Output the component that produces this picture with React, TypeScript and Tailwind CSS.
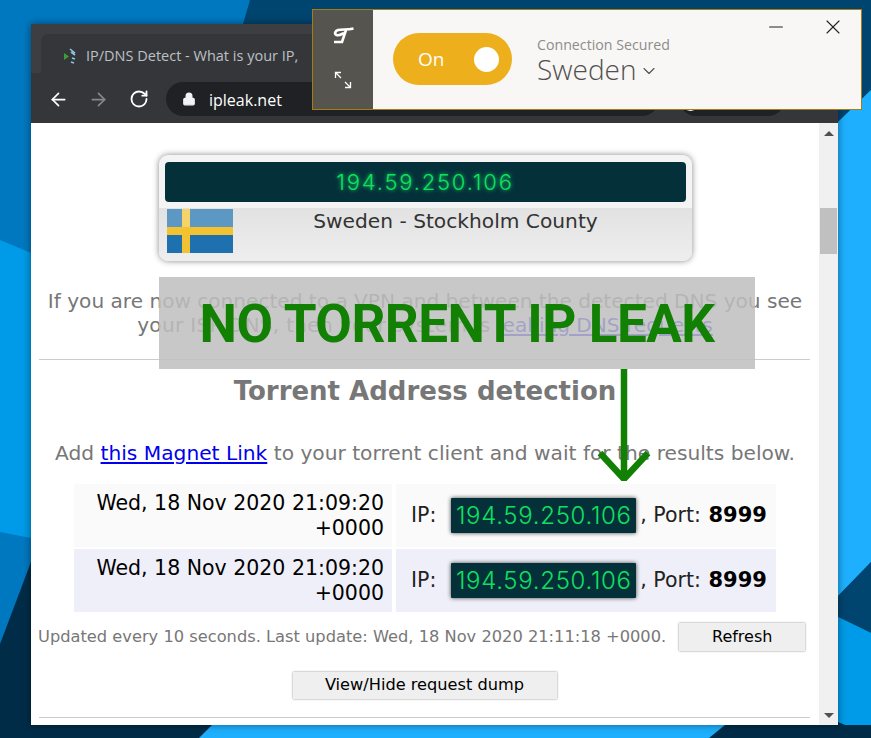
import { ArrowLeft, ArrowRight, ChevronDown, Lock, Minus, RotateCw, X } from "lucide-react";

const sans = "font-['DejaVu_Sans',sans-serif]";
const digital = "font-['Inter',sans-serif]";

function IpBadge() {
  return (
    <span
      className={`${digital} inline-block h-[35px] w-[185px] rounded-[1px] bg-[#04303a] text-center text-[24px] leading-[35px] font-light tracking-[0.7px] text-[#0fe060] shadow-[0_0_4px_#444]`}
    >
      194.59.250.106
    </span>
  );
}

function TorrentRow({ tint }: { tint: string }) {
  return (
    <div className="flex gap-[4px]">
      <div className={`${tint} h-[63px] w-[318px] px-[8px] pt-[7px] text-right text-[20.5px] leading-[25px] text-black`}>
        Wed, 18 Nov 2020 21:09:20
        <br />
        +0000
      </div>
      <div className={`${tint} flex h-[63px] w-[380px] items-center pl-[15px] text-[20.5px] text-[#222]`}>
        <span className="mr-[15px]">IP:</span>
        <IpBadge />
        <span className="ml-[4px]">, Port:&nbsp;</span>
        <b className="ml-[1px] text-[21px] text-black">8999</b>
      </div>
    </div>
  );
}

function Chrome() {
  return (
    <div className="flex h-[99px] flex-col bg-[#35363a]">
      <div className="flex h-[49px] items-end bg-[#3c3e41] pl-[10px]">
        <div className="flex h-[39px] w-[300px] items-center rounded-t-[8px] bg-[#35363a] pt-[4px] pl-[22px]">
          <svg width="14" height="18" viewBox="0 0 14 18" className="mr-[9px]">
            <path d="M1 6v7l5-3.5z" fill="#3d9a3d" />
            <path d="M7 2l5 4M8 5l4 3M9 11l3 1M8 15l3 1" stroke="#8fc4dc" strokeWidth="1.6" />
          </svg>
          <span className="font-['Open_Sans',sans-serif] text-[14.5px] whitespace-nowrap text-[#bdc1c6]">
            IP/DNS Detect - What is your IP,
          </span>
        </div>
      </div>
      <div className="flex h-[50px] items-start pt-[9px] pl-[17px]">
        <ArrowLeft size={21} strokeWidth={2} className="mt-[7px] text-white" />
        <ArrowRight size={21} strokeWidth={2} className="mt-[7px] ml-[19px] text-[#85878a]" />
        <RotateCw size={20} strokeWidth={2.2} className="mt-[7px] ml-[20px] text-white" />
        <div className="ml-[17px] flex h-[34px] w-[493px] items-center rounded-full bg-[#202124] pl-[16px]">
          <Lock size={14} fill="#f1f3f4" className="text-[#f1f3f4]" />
          <span className="mt-[1px] ml-[13px] font-['Open_Sans',sans-serif] text-[16px] text-white">ipleak.net</span>
        </div>
        <div className="ml-[20px] h-[34px] w-[106px] overflow-hidden rounded-full bg-[#202124] pt-[9px] pl-[3px]">
          <div className="h-[20px] w-[17px] rounded-full bg-white" />
        </div>
      </div>
    </div>
  );
}

function Scrollbar() {
  return (
    <div className="flex w-[19px] flex-col items-center bg-[#f0f0f0]">
      <div className="mt-[8px] h-0 w-0 border-x-[5px] border-b-[5px] border-x-transparent border-b-[#505050]" />
      <div className="mt-[72px] h-[46px] w-[17px] bg-[#c0c0c0]" />
      <div className="mt-auto mb-[7px] h-0 w-0 border-x-[5px] border-t-[5px] border-x-transparent border-t-[#505050]" />
    </div>
  );
}

function Page() {
  return (
    <div className={`${sans} flex min-h-0 flex-1 flex-col items-center bg-white`}>
      <div className="mt-[32px] h-[106px] w-[533px] overflow-hidden rounded-[9px] bg-[#f4f4f4] pt-[7px] shadow-[0_0_6px_#888]">
        <div
          className={`${digital} mx-[6px] h-[40px] rounded-[4px] bg-[#04303a] text-center text-[22px] leading-[40px] font-light tracking-[1.8px] text-[#0fe060] [text-shadow:0_0_4px_#0fe060]`}
        >
          194.59.250.106
        </div>
        <div className="mt-[6px] flex h-[53px] bg-gradient-to-b from-[#e2e2e2] to-[#eeeeee] pt-[1px] pl-[8px]">
          <svg width="66" height="44" viewBox="0 0 66 44" className="shrink-0">
            <rect width="66" height="44" fill="#1f70ae" />
            <rect x="15" width="8" height="44" fill="#f2c230" />
            <rect y="18" width="66" height="8" fill="#f2c230" />
            <rect width="66" height="18" fill="#fff" opacity="0.28" />
          </svg>
          <div className="flex-1 pr-[13px] text-center text-[20.2px] leading-[24px] text-[#333]">
            Sweden - Stockholm County
          </div>
        </div>
      </div>
      <p className="mt-[28px] w-[770px] text-center text-[20.1px] leading-[24px] text-[#777]">
        If you are now connected to a VPN and between the detected DNS you see{" "}
        <span className="tracking-[0.3px]">your ISP DNS, then your system is</span>{" "}
        <span className="text-[#0000ee] underline">leaking DNS requests</span>
      </p>
      <div className="mt-[22px] mr-[1px] h-px w-[771px] bg-[#ccc]" />
      <h2 className="mt-[15px] text-[26px] leading-[32px] font-bold text-[#777]">Torrent Address detection</h2>
      <p className="mt-[34px] text-[20.2px] leading-[24px] text-[#777]">
        Add <span className="text-[#0000ee] underline">this Magnet Link</span> to your torrent client and wait for the results below.
      </p>
      <div className="mt-[19px] flex flex-col gap-[2px]">
        <TorrentRow tint="bg-[#fafafa]" />
        <TorrentRow tint="bg-[#efeff9]" />
      </div>
      <div className="mt-[11px] mr-[1px] flex w-[773px] items-center">
        <span className="text-[16.25px] whitespace-nowrap text-[#777]">
          Updated every 10 seconds. Last update: Wed, 18 Nov 2020 21:11:18 +0000.
        </span>
        <button className="ml-[13px] h-[28px] w-[126px] bg-[#efefef] text-[16px] text-black shadow-[0_0_2px_#888]">Refresh</button>
      </div>
      <button className="mt-[21px] mr-[1px] h-[27px] w-[264px] bg-[#efefef] text-[16.2px] text-black shadow-[0_0_2px_#888]">
        View/Hide request dump
      </button>
      <div className="mt-[18px] mr-[1px] h-px w-[771px] bg-[#ccc]" />
    </div>
  );
}

function Vpn() {
  return (
    <div className="absolute top-[9px] left-[312px] flex h-[101px] w-[550px] border border-[#a87c10] bg-[#f9f7f5]">
      <div className="flex w-[60px] flex-col items-center bg-[#55544e] pt-[17px]">
        <svg width="21" height="17" viewBox="0 0 21 17" fill="none" stroke="#fff" strokeWidth="2.6">
          <path d="M13 3L9 15H1" />
          <path d="M20.5 1.5C14 3 9 2 5 3C2 4 1 7 3.5 8C6 9 9 7 11 6" />
        </svg>
        <svg width="18" height="18" viewBox="0 0 18 18" fill="none" stroke="#fff" strokeWidth="1.3" className="mt-[27px]">
          <path d="M1.5 1.5L7 7M1.5 7V1.5H7M16.5 16.5L11 11M16.5 11V16.5H11" />
        </svg>
      </div>
      <div className="mt-[23px] ml-[20px] flex h-[52px] w-[119px] items-center justify-between rounded-full bg-[#edaf1b] pr-[13px] pl-[25px]">
        <span className="font-['Open_Sans',sans-serif] text-[19px] text-white">On</span>
        <div className="h-[25px] w-[25px] rounded-full bg-white" />
      </div>
      <div className="mt-[26px] ml-[25px] font-['Open_Sans',sans-serif]">
        <div className="text-[14.2px] leading-[18px] text-[#8c8c8c]">Connection Secured</div>
        <div className="flex items-center text-[28px] leading-[31px] font-light text-[#505050]">
          Sweden
          <ChevronDown size={20} strokeWidth={1.3} className="mt-[2px] ml-[3px]" />
        </div>
      </div>
      <Minus size={22} strokeWidth={1.2} className="absolute top-[6px] left-[452px] text-[#222]" />
      <X size={24} strokeWidth={1.1} className="absolute top-[5px] left-[508px] text-[#222]" />
    </div>
  );
}

export default function App() {
  return (
    <div className="relative h-[738px] w-[871px] overflow-hidden bg-[#0078c0]">
      <svg className="absolute inset-0" width="871" height="738" viewBox="0 0 871 738">
        <polygon points="250,0 871,0 871,90 838,122 838,24 243,24" fill="#00456f" />
        <polygon points="838,122 871,90 871,562 838,596" fill="#1eb0ff" />
        <polygon points="838,596 871,562 871,633 838,617" fill="#00456f" />
        <polygon points="838,617 871,633 871,738 838,738" fill="#009be8" />
        <polygon points="838,722 871,736 871,738 838,738" fill="#002c48" />
        <polygon points="0,240 31,253 31,538 0,532" fill="#009be8" />
        <polygon points="31,562 0,644 0,738 31,738" fill="#002c48" />
        <polygon points="0,725 871,725 871,738 0,738" fill="#002c48" />
        <polygon points="212,725 725,725 709,738 199,738" fill="#1eb0ff" />
      </svg>
      <div className="absolute top-[24px] left-[31px] flex h-[701px] w-[807px] flex-col shadow-[0_0_8px_rgba(0,0,0,0.45)]">
        <Chrome />
        <div className="flex min-h-0 flex-1">
          <Page />
          <Scrollbar />
        </div>
      </div>
      <div className="absolute top-[277px] left-[159px] flex h-[92px] w-[596px] items-center justify-center bg-[rgba(190,190,190,0.85)] pt-[4px]">
        <span className="font-['Roboto',sans-serif] text-[53px] font-bold tracking-[-0.5px] text-[#118003]">NO TORRENT IP LEAK</span>
      </div>
      <svg className="absolute top-[369px] left-[596px]" width="56" height="112" viewBox="0 0 56 112" fill="none" stroke="#118003" strokeWidth="6.5">
        <path d="M28 0v110M4 84l24 26 24-26" />
      </svg>
      <Vpn />
    </div>
  );
}
